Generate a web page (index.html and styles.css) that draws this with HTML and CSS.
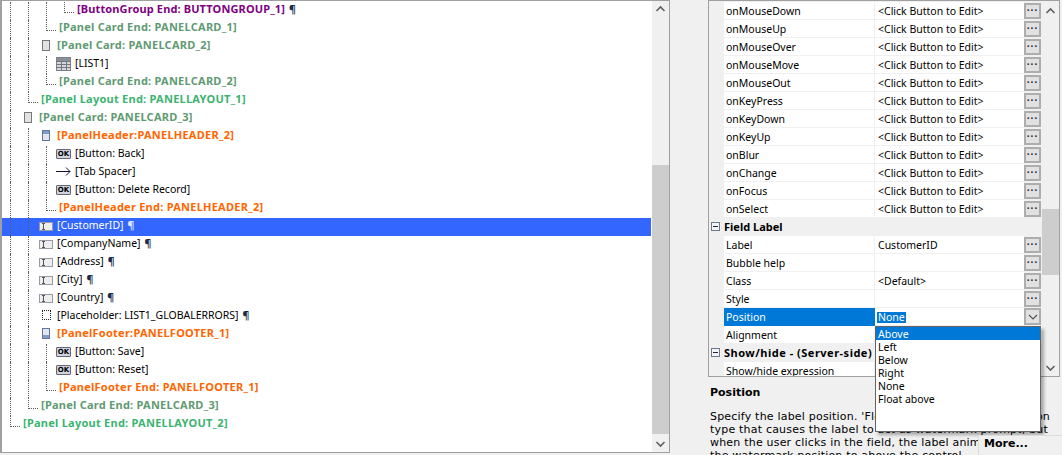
FILE: index.html
```html
<!DOCTYPE html>
<html lang="en">
<head>
<meta charset="utf-8">
<title>Field properties</title>
<link rel="stylesheet" href="styles.css">
</head>
<body>
<section class="tree-panel">
  <div class="tree">
    <div class="row"><i class="g"></i><i class="g"></i><i class="g"></i><i class="e"></i><span class="t purple">[ButtonGroup End: BUTTONGROUP_1]</span><span class="p">¶</span></div>
    <div class="row"><i class="g"></i><i class="g"></i><i class="e"></i><span class="t card">[Panel Card End: PANELCARD_1]</span></div>
    <div class="row"><i class="g"></i><i class="g w14"></i><i class="ic-card"></i><span class="t card">[Panel Card: PANELCARD_2]</span></div>
    <div class="row"><i class="g"></i><i class="g"></i><i class="g w10"></i><svg class="ic-list" viewBox="0 0 15 14"><rect x=".5" y=".5" width="14" height="13" fill="#d4d6de" stroke="#7f8088"/><path d="M0 4.5h15M0 7.5h15M0 10.5h15M5.500 0v14M10.500 0v14" stroke="#74767e" fill="none"/><rect x="1" y="1" width="13" height="3" fill="#8d8f98"/></svg><span class="t">[LIST1]</span></div>
    <div class="row"><i class="g"></i><i class="g"></i><i class="e"></i><span class="t card">[Panel Card End: PANELCARD_2]</span></div>
    <div class="row"><i class="g"></i><i class="e"></i><span class="t layout">[Panel Layout End: PANELLAYOUT_1]</span></div>
    <div class="row"><i class="g w14"></i><i class="ic-card"></i><span class="t card">[Panel Card: PANELCARD_3]</span></div>
    <div class="row"><i class="g"></i><i class="g w14"></i><i class="ic-card head"></i><span class="t orange">[PanelHeader:PANELHEADER_2]</span></div>
    <div class="row"><i class="g"></i><i class="g"></i><i class="g w10"></i><span class="ic-ok">OK</span><span class="t">[Button: Back]</span></div>
    <div class="row"><i class="g"></i><i class="g"></i><i class="g w10"></i><svg class="ic-arrow" viewBox="0 0 15 9"><path d="M0 4.500h14M10 .5l4 4-4 4" fill="none" stroke="#14143c"/></svg><span class="t">[Tab Spacer]</span></div>
    <div class="row"><i class="g"></i><i class="g"></i><i class="g w10"></i><span class="ic-ok">OK</span><span class="t">[Button: Delete Record]</span></div>
    <div class="row"><i class="g"></i><i class="g"></i><i class="e"></i><span class="t orange">[PanelHeader End: PANELHEADER_2]</span></div>
    <div class="row selected"><i class="g"></i><i class="g w11"></i><svg class="ic-input" viewBox="0 0 14 9"><rect x=".5" y=".5" width="13" height="8" fill="#eee" stroke="#9a9aa6"/><path d="M3 1.500h3M3 7.500h3M4.500 1.500v6" stroke="#555" fill="none"/></svg><span class="t">[CustomerID]</span><span class="p">¶</span></div>
    <div class="row"><i class="g"></i><i class="g w11"></i><svg class="ic-input" viewBox="0 0 14 9"><rect x=".5" y=".5" width="13" height="8" fill="#eee" stroke="#9a9aa6"/><path d="M3 1.500h3M3 7.500h3M4.500 1.500v6" stroke="#555" fill="none"/></svg><span class="t">[CompanyName]</span><span class="p">¶</span></div>
    <div class="row"><i class="g"></i><i class="g w11"></i><svg class="ic-input" viewBox="0 0 14 9"><rect x=".5" y=".5" width="13" height="8" fill="#eee" stroke="#9a9aa6"/><path d="M3 1.500h3M3 7.500h3M4.500 1.500v6" stroke="#555" fill="none"/></svg><span class="t">[Address]</span><span class="p">¶</span></div>
    <div class="row"><i class="g"></i><i class="g w11"></i><svg class="ic-input" viewBox="0 0 14 9"><rect x=".5" y=".5" width="13" height="8" fill="#eee" stroke="#9a9aa6"/><path d="M3 1.500h3M3 7.500h3M4.500 1.500v6" stroke="#555" fill="none"/></svg><span class="t">[City]</span><span class="p">¶</span></div>
    <div class="row"><i class="g"></i><i class="g w11"></i><svg class="ic-input" viewBox="0 0 14 9"><rect x=".5" y=".5" width="13" height="8" fill="#eee" stroke="#9a9aa6"/><path d="M3 1.500h3M3 7.500h3M4.500 1.500v6" stroke="#555" fill="none"/></svg><span class="t">[Country]</span><span class="p">¶</span></div>
    <div class="row"><i class="g"></i><i class="g w14"></i><i class="ic-ph"></i><span class="t">[Placeholder: LIST1_GLOBALERRORS]</span><span class="p">¶</span></div>
    <div class="row"><i class="g"></i><i class="g w14"></i><i class="ic-card foot"></i><span class="t orange">[PanelFooter:PANELFOOTER_1]</span></div>
    <div class="row"><i class="g"></i><i class="g"></i><i class="g w10"></i><span class="ic-ok">OK</span><span class="t">[Button: Save]</span></div>
    <div class="row"><i class="g"></i><i class="g"></i><i class="g w10"></i><span class="ic-ok">OK</span><span class="t">[Button: Reset]</span></div>
    <div class="row"><i class="g"></i><i class="g"></i><i class="e"></i><span class="t orange">[PanelFooter End: PANELFOOTER_1]</span></div>
    <div class="row"><i class="g"></i><i class="e"></i><span class="t card">[Panel Card End: PANELCARD_3]</span></div>
    <div class="row"><i class="e"></i><span class="t layout">[Panel Layout End: PANELLAYOUT_2]</span></div>
  </div>
  <div class="scrollbar tree-bar">
    <svg class="arrow" viewBox="0 0 17 17"><path d="M4.500 10l4-4 4 4" fill="none" stroke="#606060" stroke-width="1.6"/></svg>
    <div class="track"><div class="thumb"></div></div>
    <svg class="arrow" viewBox="0 0 17 17"><path d="M4.500 7l4 4 4-4" fill="none" stroke="#606060" stroke-width="1.6"/></svg>
  </div>
</section>

<section class="side">
  <div class="grid">
    <div class="props">
      <div class="prop"><span class="name">onMouseDown</span><span class="val">&lt;Click Button to Edit&gt;</span><span class="btn">...</span></div>
      <div class="prop"><span class="name">onMouseUp</span><span class="val">&lt;Click Button to Edit&gt;</span><span class="btn">...</span></div>
      <div class="prop"><span class="name">onMouseOver</span><span class="val">&lt;Click Button to Edit&gt;</span><span class="btn">...</span></div>
      <div class="prop"><span class="name">onMouseMove</span><span class="val">&lt;Click Button to Edit&gt;</span><span class="btn">...</span></div>
      <div class="prop"><span class="name">onMouseOut</span><span class="val">&lt;Click Button to Edit&gt;</span><span class="btn">...</span></div>
      <div class="prop"><span class="name">onKeyPress</span><span class="val">&lt;Click Button to Edit&gt;</span><span class="btn">...</span></div>
      <div class="prop"><span class="name">onKeyDown</span><span class="val">&lt;Click Button to Edit&gt;</span><span class="btn">...</span></div>
      <div class="prop"><span class="name">onKeyUp</span><span class="val">&lt;Click Button to Edit&gt;</span><span class="btn">...</span></div>
      <div class="prop"><span class="name">onBlur</span><span class="val">&lt;Click Button to Edit&gt;</span><span class="btn">...</span></div>
      <div class="prop"><span class="name">onChange</span><span class="val">&lt;Click Button to Edit&gt;</span><span class="btn">...</span></div>
      <div class="prop"><span class="name">onFocus</span><span class="val">&lt;Click Button to Edit&gt;</span><span class="btn">...</span></div>
      <div class="prop"><span class="name">onSelect</span><span class="val">&lt;Click Button to Edit&gt;</span><span class="btn">...</span></div>
      <div class="cat"><i class="minus"></i><b>Field Label</b></div>
      <div class="prop"><span class="name">Label</span><span class="val">CustomerID</span><span class="btn">...</span></div>
      <div class="prop"><span class="name">Bubble help</span><span class="val"></span><span class="btn">...</span></div>
      <div class="prop"><span class="name">Class</span><span class="val">&lt;Default&gt;</span><span class="btn">...</span></div>
      <div class="prop"><span class="name">Style</span><span class="val"></span><span class="btn">...</span></div>
      <div class="prop active"><span class="name">Position</span><span class="val"><span class="sel">None</span></span><span class="btn combo"><svg class="chev" viewBox="0 0 12 8"><path d="M2 2l4 4 4-4" fill="none" stroke="#555" stroke-width="1.2"/></svg></span></div>
      <div class="prop"><span class="name">Alignment</span><span class="val"></span><span class="blank"></span></div>
      <div class="cat"><i class="minus"></i><b class="wide">Show/hide - (Server-side)</b></div>
      <div class="prop"><span class="name">Show/hide expression</span><span class="val"></span><span class="blank"></span></div>
    </div>
    <div class="scrollbar grid-bar">
      <svg class="arrow" viewBox="0 0 17 17"><path d="M4.500 12l4-4 4 4" fill="none" stroke="#606060" stroke-width="1.6"/></svg>
      <div class="track"><div class="thumb"></div></div>
      <svg class="arrow" viewBox="0 0 17 17"><path d="M4.500 7l4 4 4-4" fill="none" stroke="#606060" stroke-width="1.6"/></svg>
    </div>
  </div>
  <div class="help">
    <h2>Position</h2>
    <p>Specify the label position. 'Float above' is a label animation</p>
    <p>type that causes the label to act as watermark prompt, but</p>
    <p>when the user clicks in the field, the label animates from</p>
    <p>the watermark position to above the control.</p>
  </div>
  <ul class="dropdown">
    <li class="on">Above</li>
    <li>Left</li>
    <li>Below</li>
    <li>Right</li>
    <li>None</li>
    <li>Float above</li>
  </ul>
  <div class="more">More...</div>
</section>
</body>
</html>
```
FILE: styles.css
```css
* { box-sizing: border-box; }
html, body { margin: 0; height: 455px; overflow: hidden; }
body {
  display: flex;
  align-items: flex-start;
  background: #f0f0f0;
  font: 10.5px/15px "Noto Sans", sans-serif;
  color: #000;
}
i { display: block; flex: none; }

.tree-panel {
  width: 670px;
  height: 453px;
  display: flex;
  background: #fff;
  border: solid #a0a0a0;
  border-width: 1px 1px 1px 2px;
}
.tree { width: 650px; padding: 1px 1px 0 0; }
.row {
  display: flex;
  height: 18px;
  padding-left: 8px;
  line-height: 14px;
  white-space: nowrap;
}
.row.selected { background: #3366ff; color: #fff; }
.g { width: 18px; height: 18px; border-left: 1px dotted #5c5c5c; }
.g.w14 { width: 14px; }
.g.w11 { width: 11px; }
.g.w10 { width: 10px; }
.e { width: 13px; height: 18px; }
.e::before {
  content: "";
  display: block;
  width: 9px;
  height: 10px;
  border-left: 1px dotted #5c5c5c;
  border-bottom: 1px dotted #5c5c5c;
}
.t { display: block; }
.p { margin-left: 4px; font-weight: 700; color: #1c2b4a; }
.selected .p { color: #dfe6ff; }
.purple, .card, .layout, .orange { font-size: 11px; font-weight: 700; letter-spacing: .25px; }
.purple { color: #800080; letter-spacing: .13px; }
.card { color: #5f9a72; }
.layout { color: #3cb371; }
.orange { color: #ff6600; }

.ic-card {
  width: 8px;
  height: 11px;
  margin: 2px 7px 0 0;
  border: 1px solid #777;
  background: #e2e2e2;
}
.ic-card.head { border-color: #64759a; background: linear-gradient(#7f9bcc 0 3px, #e2e5ee 3px); }
.ic-card.foot { border-color: #64759a; background: linear-gradient(#e2e5ee 6px, #7f9bcc 6px); }
.ic-list { width: 15px; height: 14px; margin: 1px 4px 0 0; flex: none; }
.ic-ok {
  flex: none;
  width: 15px;
  height: 10px;
  margin: 3px 4px 0 0;
  border: 1px solid #66667a;
  border-radius: 1px;
  background: #d2d2dc;
  font: 700 7px/8px "DejaVu Sans", sans-serif;
  text-align: center;
}
.ic-arrow { width: 15px; height: 9px; margin: 3px 4px 0 0; flex: none; }
.ic-input { width: 14px; height: 9px; margin: 4px 4px 0 0; flex: none; }
.ic-ph { width: 9px; height: 10px; margin: 2px 6px 0 0; border: 1px dotted #222; }

.scrollbar { width: 17px; display: flex; flex-direction: column; background: #f0f0f0; flex: none; }
.arrow { width: 17px; height: 17px; flex: none; }
.track { flex: 1; }
.thumb { background: #cdcdcd; }
.tree-bar .track { padding-top: 147px; }
.tree-bar .thumb { height: 269px; }
.grid-bar .track { padding-top: 191px; }
.grid-bar .thumb { height: 66px; }

.side { position: relative; width: 352px; height: 455px; margin-left: 38px; flex: none; }
.grid {
  display: flex;
  height: 377px;
  background: #f0f0f0;
  border: 1px solid #a0a0a0;
  overflow: hidden;
}
.props { width: 333px; padding-top: 1px; flex: none; }
.prop { display: flex; height: 18px; white-space: nowrap; padding-left: 15px; }
.name, .val { display: block; height: 18px; background: #fff; padding-top: 2px; line-height: 14px; border-bottom: 1px solid #f0f0f0; }
.name { width: 151px; padding-left: 2px; border-right: 1px solid #f0f0f0; }
.val { width: 149px; padding-left: 3px; }
.btn, .blank { width: 18px; height: 18px; flex: none; background: #fff; }
.btn {
  display: block;
  height: 16px;
  width: 17px;
  margin: 1px 0 0;
  border: 2px solid #adadad;
  background: #e1e1e1;
  font: 700 10px/5px "Noto Sans", sans-serif;
  letter-spacing: 1px;
  text-align: center;
  color: #223;
}
.btn.combo { height: 17px; margin-top: 0; }
.chev { display: block; width: 12px; height: 8px; margin: 3px auto 0; }
.active .name { background: #0078d7; color: #fff; border-color: #0078d7; }
.sel { display: inline-block; background: #0078d7; color: #fff; padding: 0 1px; margin-left: -1px; line-height: 11px; }
.cat { display: flex; height: 18px; padding: 1px 0 0 15px; }
.cat b { font-size: 11px; font-weight: 700; }
.cat b.wide { letter-spacing: .5px; }
.minus {
  width: 9px;
  height: 9px;
  margin: 3px 4px 0 -13px;
  border: 1px solid #6b7a90;
  background: linear-gradient(#223, #223) center / 5px 1px no-repeat #f4f4f4;
}

.help { padding: 9px 2px 0; font: 11px/13px "DejaVu Sans", sans-serif; letter-spacing: .2px; white-space: nowrap; height: 78px; overflow: hidden; }
.help h2 { margin: 0 0 10px; font: 700 11px/14px "DejaVu Sans", sans-serif; letter-spacing: 0; }
.help p { margin: 0; }

.dropdown {
  position: absolute;
  left: 167px;
  top: 326px;
  width: 166px;
  height: 106px;
  margin: 0;
  padding: 0;
  list-style: none;
  background: #fff;
  border: 1px solid #646464;
  box-shadow: 3px 3px 3px rgba(0, 0, 0, .3);
}
.dropdown li { height: 13px; line-height: 14px; padding-left: 2px; }
.dropdown .on { background: #0078d7; color: #fff; }
.more {
  position: absolute;
  left: 270px;
  top: 435px;
  width: 84px;
  height: 20px;
  padding: 0 5px;
  background: #f0f0f0;
  border: solid #dcdcdc;
  border-width: 1px 0 0 1px;
  font: 700 11px/15px "DejaVu Sans", sans-serif;
}
```
